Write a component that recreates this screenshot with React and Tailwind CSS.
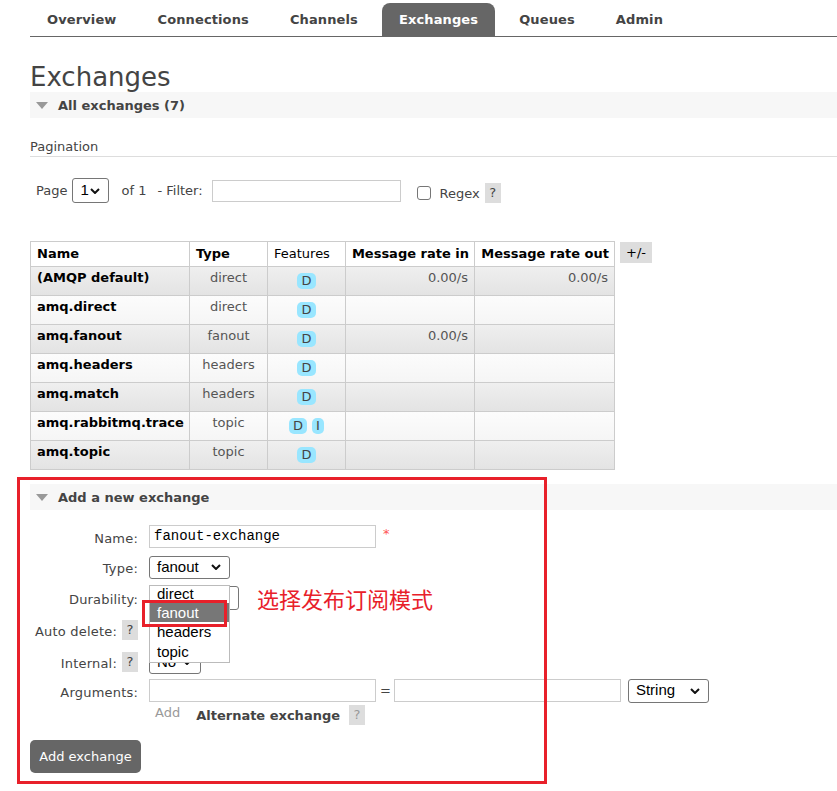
import React from "react";

const rows = [
  ["(AMQP default)", "direct", ["D"], "0.00/s", "0.00/s"],
  ["amq.direct", "direct", ["D"], "", ""],
  ["amq.fanout", "fanout", ["D"], "0.00/s", ""],
  ["amq.headers", "headers", ["D"], "", ""],
  ["amq.match", "headers", ["D"], "", ""],
  ["amq.rabbitmq.trace", "topic", ["D", "I"], "", ""],
  ["amq.topic", "topic", ["D"], "", ""],
];

const tabs = ["Overview", "Connections", "Channels", "Exchanges", "Queues", "Admin"];

function Chevron({ className }) {
  return (
    <svg className={className} width="10" height="6" viewBox="0 0 10 6">
      <path d="M1 1l4 4 4-4" stroke="#111" strokeWidth="2" fill="none" />
    </svg>
  );
}

function FakeSelect({ value, className }) {
  return (
    <div
      className={`relative flex items-center border border-[#767676] rounded-[3px] bg-white pl-[7px] font-['Liberation_Sans',Arial,sans-serif] text-[15px] text-black ${className}`}
    >
      <span>{value}</span>
      <Chevron className="absolute right-[8px] top-1/2 -translate-y-1/2" />
    </div>
  );
}

function Help({ className = "" }) {
  return (
    <span className={`inline-flex w-[16px] h-[20px] items-center justify-center bg-[#ddd] text-[13px] ${className}`}>
      ?
    </span>
  );
}

function SectionBar({ title }) {
  return (
    <div className="flex items-center h-[26px] bg-[#f7f7f7]">
      <svg className="ml-[6px]" width="12" height="7" viewBox="0 0 12 7">
        <path d="M0 0h12L6 7z" fill="#999" />
      </svg>
      <span className="ml-[10px] mt-[1px] font-bold text-[13px] text-[#444]">{title}</span>
    </div>
  );
}

function Badge({ label }) {
  return (
    <span className="inline-flex h-[16px] px-[4px] items-center justify-center rounded-[5px] bg-[#99e6ff] text-[13px] text-[#444]">
      {label}
    </span>
  );
}

function FormRow({ label, help, h, children }) {
  return (
    <div className={`flex items-center ${h}`}>
      <div className="w-[108px] flex justify-end items-center gap-[5px] text-[13px]">
        <span className="pt-[4px] tracking-[0.2px]">{label}</span>
        {help && <Help />}
      </div>
      <div className="ml-[11px] flex items-center">{children}</div>
    </div>
  );
}

export default function App() {
  return (
    <div className="font-['DejaVu_Sans',Verdana,sans-serif] text-[13px] text-[#444] bg-white min-h-[791px] pl-[30px] pb-[20px]">
      {/* tabs */}
      <div className="flex gap-[7px] pt-[3px] border-b border-[#666]">
        {tabs.map((t) => (
          <div
            key={t}
            className={`h-[33px] px-[17px] flex items-center font-bold text-[13px] tracking-[0.12px] rounded-t-[8px] ${
              t === "Exchanges" ? "bg-[#666] text-white" : "text-[#444]"
            }`}
          >
            {t}
          </div>
        ))}
      </div>

      <h1 className="mt-[26px] text-[26px] leading-[29px] text-[#444]">Exchanges</h1>
      <SectionBar title="All exchanges (7)" />

      <div className="mt-[21px] leading-[16px] pb-[1px] border-b border-[#ddd]">Pagination</div>

      <div className="mt-[21px] h-[25px] flex items-center pl-[6px]">
        <span>Page</span>
        <FakeSelect value="1" className="ml-[5px] w-[37px] h-[25px]" />
        <span className="ml-[12px]">of 1</span>
        <span className="ml-[11px]">- Filter:</span>
        <div className="ml-[9px] w-[189px] h-[22px] border border-[#ccc] bg-white" />
        <div className="ml-[16px] w-[14px] h-[14px] border border-[#767676] rounded-[3px] bg-white mt-[4px]" />
        <span className="ml-[9px] mt-[6px]">Regex</span>
        <Help className="ml-[5px] mt-[5px]" />
      </div>

      {/* table */}
      <div className="mt-[38px] flex items-start">
        <div className="w-[585px] border-l border-t border-[#ccc]">
          <div className="grid grid-cols-[159px_78px_78px_129px_140px] bg-white">
            {["Name", "Type", "Features", "Message rate in", "Message rate out"].map((h, i) => (
              <div
                key={h}
                className={`h-[25px] flex items-center border-r border-b border-[#ccc] px-[6px] whitespace-nowrap text-black ${
                  i === 2 ? "font-normal" : "font-bold"
                } ${i >= 3 ? "justify-end pr-[5px]" : ""}`}
              >
                {h}
              </div>
            ))}
          </div>
          {rows.map((r, idx) => (
            <div
              key={r[0]}
              className={`grid grid-cols-[159px_78px_78px_129px_140px] ${
                idx % 2 === 0
                  ? "bg-linear-to-b from-[#efefef] to-[#e3e3e3]"
                  : "bg-linear-to-b from-[#fcfcfc] to-[#f5f5f5]"
              }`}
            >
              <div className="h-[29px] border-r border-b border-[#ccc] px-[6px] pt-[3px] leading-[16px] font-bold text-black whitespace-nowrap">
                {r[0]}
              </div>
              <div className="h-[29px] border-r border-b border-[#ccc] pt-[3px] leading-[16px] text-center text-[#555]">
                {r[1]}
              </div>
              <div className="h-[29px] border-r border-b border-[#ccc] pt-[6px] flex justify-center items-start gap-[5px]">
                {r[2].map((b) => (
                  <Badge key={b} label={b} />
                ))}
              </div>
              <div className="h-[29px] border-r border-b border-[#ccc] pt-[3px] pr-[6px] leading-[16px] text-right text-[#555]">
                {r[3]}
              </div>
              <div className="h-[29px] border-r border-b border-[#ccc] pt-[3px] pr-[6px] leading-[16px] text-right text-[#555]">
                {r[4]}
              </div>
            </div>
          ))}
        </div>
        <div className="ml-[5px] mt-[1px] h-[21px] px-[6px] flex items-center bg-[#ddd] text-black">+/-</div>
      </div>

      {/* add a new exchange */}
      <div className="relative mt-[14px]">
        <SectionBar title="Add a new exchange" />

        <div className="mt-[11px]">
          <FormRow label="Name:" h="h-[31px]">
            <div className="w-[227px] h-[23px] border border-[#ccc] bg-white flex items-center pl-[4px] font-['Liberation_Mono','Courier_New',monospace] text-[14px] text-black">
              fanout-exchange
            </div>
            <span className="ml-[7px] -mt-[6px] text-[#f55] text-[13px]">*</span>
          </FormRow>
          <FormRow label="Type:" h="h-[30px]">
            <FakeSelect value="fanout" className="w-[81px] h-[23px]" />
          </FormRow>
          <FormRow label="Durability:" h="h-[31px]">
            <FakeSelect value="Durable" className="w-[90px] h-[24px]" />
            <span className="ml-[18px] text-[22px] leading-[26px] text-[#e8202a] font-['Noto_Sans_CJK_SC',sans-serif]">
              选择发布订阅模式
            </span>
          </FormRow>
          <FormRow label="Auto delete:" help h="h-[34px]">
            <FakeSelect value="No" className="w-[52px] h-[23px]" />
          </FormRow>
          <FormRow label="Internal:" help h="h-[30px]">
            <FakeSelect value="No" className="w-[52px] h-[23px]" />
          </FormRow>
          <FormRow label="Arguments:" h="h-[27px]">
            <div className="w-[227px] h-[23px] border border-[#ccc] bg-white" />
            <span className="ml-[4px] mr-[3px] text-[13px]">=</span>
            <div className="w-[227px] h-[23px] border border-[#ccc] bg-white" />
            <FakeSelect value="String" className="ml-[7px] w-[81px] h-[24px]" />
          </FormRow>
          <div className="flex items-center h-[22px] pl-[125px]">
            <span className="-mt-[5px] text-[#999] text-[13px]">Add</span>
            <span className="ml-[16px] mt-[2px] font-bold text-[13px] text-[#444]">Alternate exchange</span>
            <Help className="ml-[9px] text-[#999]" />
          </div>
          <button className="mt-[14px] h-[33px] w-[111px] rounded-[5px] bg-[#666] text-white text-[13px]">
            Add exchange
          </button>
        </div>

        {/* open dropdown list of the Type select */}
        <div className="absolute left-[119px] top-[101px] w-[81px] h-[78px] border border-[#bbb] bg-white font-['Liberation_Sans',Arial,sans-serif] text-[15px] text-black">
          <div className="h-[17px] leading-[15px] pl-[7px]">direct</div>
          <div className="h-[19px] leading-[19px] pl-[7px] bg-[#777] text-white">fanout</div>
          <div className="h-[20px] leading-[20px] pl-[7px]">headers</div>
          <div className="h-[20px] leading-[20px] pl-[7px]">topic</div>
        </div>

        {/* annotation boxes */}
        <div className="absolute left-[112px] top-[116px] w-[85px] h-[27px] border-[3px] border-[#e8202a]" />
        <div className="absolute -left-[13px] -top-[7px] w-[530px] h-[307px] border-[3px] border-[#e8202a] pointer-events-none" />
      </div>
    </div>
  );
}
